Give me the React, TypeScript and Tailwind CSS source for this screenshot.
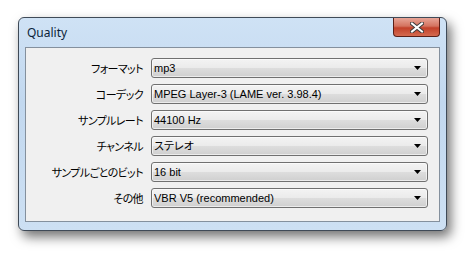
import React from "react";

const rows = [
  { label: "フォーマット", value: "mp3" },
  { label: "コーデック", value: "MPEG Layer-3 (LAME ver. 3.98.4)" },
  { label: "サンプルレート", value: "44100 Hz" },
  { label: "チャンネル", value: "ステレオ" },
  { label: "サンプルごとのビット", value: "16 bit" },
  { label: "その他", value: "VBR V5 (recommended)" },
];

const Combo = ({ value }: { value: string }) => (
  <div className="flex h-[20px] w-[277px] items-center rounded-[3px] border border-[#707070] bg-[linear-gradient(#f3f3f3_0%,#ebebeb_48%,#dddddd_52%,#cfcfcf_100%)] pl-[2px] pr-[6px] shadow-[inset_0_0_0_1px_rgba(255,255,255,0.6)]">
    <span className="flex-1 truncate text-[11px] leading-none text-black [font-family:'Liberation_Sans','Noto_Sans_CJK_JP',sans-serif] [font-feature-settings:'palt']">
      {value}
    </span>
    <svg width="7" height="4" viewBox="0 0 7 4">
      <path d="M0 0h7L3.5 4z" fill="#000" />
    </svg>
  </div>
);

export default function App() {
  return (
    <div className="h-[255px] w-[470px] overflow-hidden bg-white">
      <div className="ml-[18px] mt-[17px] flex h-[214px] w-[429px] flex-col rounded-[6px] border border-[#3f4a57] bg-[linear-gradient(#cfe2f5,#c2d8ef_40%,#cde0f3)] shadow-[4px_6px_12px_rgba(0,0,0,0.55)]">
        <div className="flex h-[29px] items-start justify-between">
          <span className="ml-[8px] mt-[6px] text-[12px] text-[#0b1f3a] [font-family:'Noto_Sans','Liberation_Sans',sans-serif]">
            Quality
          </span>
          <div className="mr-[6px] flex h-[19px] w-[47px] items-center justify-center rounded-b-[4px] border border-t-0 border-[#5a1f17] bg-[linear-gradient(#e8a597,#d4735f_45%,#c2412a_55%,#d46a4f)]">
            <svg width="14" height="11" viewBox="0 0 14 11">
              <path
                d="M2 1.5L12 9.5M12 1.5L2 9.5"
                stroke="#3b3b3b"
                strokeWidth="4"
                strokeLinecap="square"
              />
              <path
                d="M2 1.5L12 9.5M12 1.5L2 9.5"
                stroke="#ffffff"
                strokeWidth="2"
                strokeLinecap="square"
              />
            </svg>
          </div>
        </div>
        <div className="mb-[8px] ml-[6px] mr-[6px] flex-1 border border-[#84909d] bg-[#f0f0f0] pt-[10px]">
          <div className="grid grid-cols-[117px_277px] gap-x-[8px] gap-y-[6px]">
            {rows.map((r) => (
              <React.Fragment key={r.label}>
                <div className="flex h-[20px] items-center justify-end whitespace-nowrap text-[11px] tracking-[-0.6px] text-black [font-family:'Noto_Sans_CJK_JP',sans-serif] [font-feature-settings:'palt']">
                  {r.label}
                </div>
                <Combo value={r.value} />
              </React.Fragment>
            ))}
          </div>
        </div>
      </div>
    </div>
  );
}
